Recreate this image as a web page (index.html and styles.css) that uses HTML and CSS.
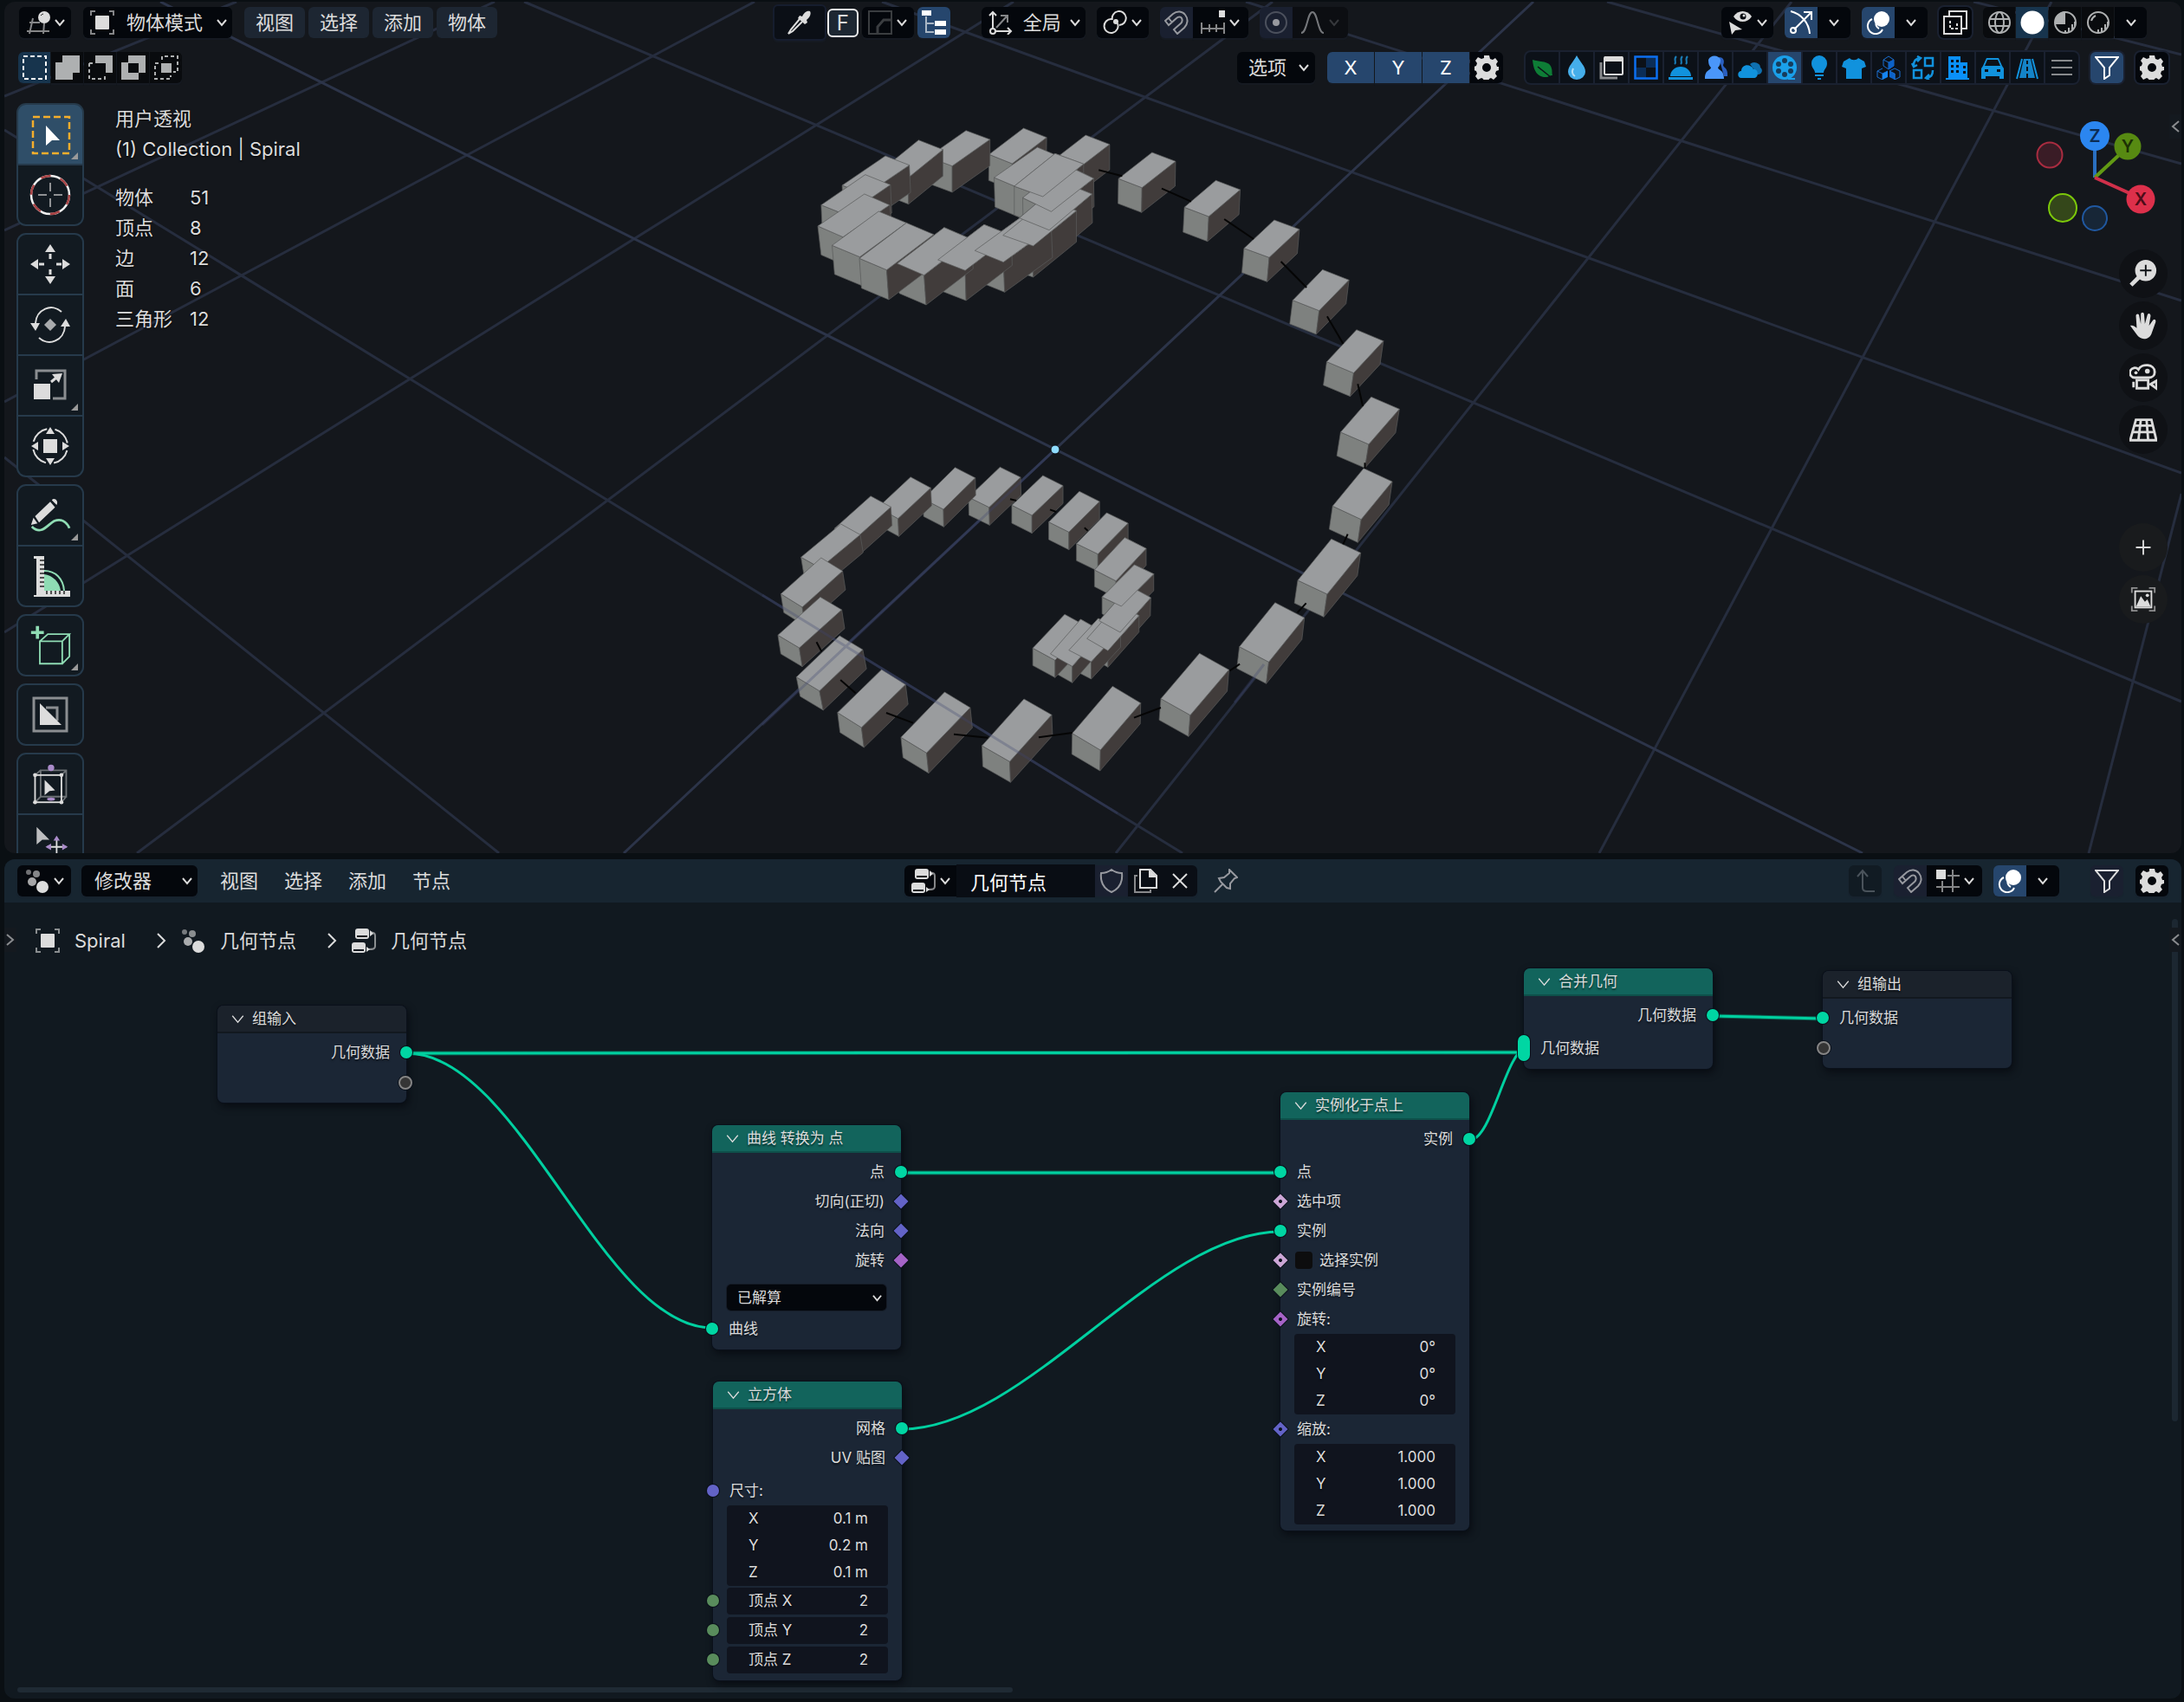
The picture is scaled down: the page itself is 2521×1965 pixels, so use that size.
FILE: index.html
```html
<!DOCTYPE html>
<html lang="zh-CN">
<head>
<meta charset="utf-8">
<title>Spiral</title>
<link rel="stylesheet" href="styles.css">
</head>
<body>
<svg class="sprite" aria-hidden="true">
  <symbol id="chev" viewBox="0 0 12 12"><path d="M1 3l5 6 5-6" class="l2"/></symbol>
  <symbol id="chev-r" viewBox="0 0 12 20"><path d="M2 2l8 8-8 8" class="l2"/></symbol>
  <symbol id="chev-l" viewBox="0 0 12 16"><path d="M10 2L3 8l7 6" class="l2"/></symbol>
  <symbol id="view3d" viewBox="0 0 28 28"><g class="dim"><path d="M8 9L4 27M21 15l-1 12M1 24h26M4 14h12" class="l2"/></g><circle cx="21" cy="8" r="7" class="f"/><path d="M17 6a5 5 0 0 1 3-2" stroke="#222" fill="none"/></symbol>
  <symbol id="object" viewBox="0 0 28 28"><path d="M1 6V1h5M22 1h5v5M27 22v5h-5M6 27H1v-5" class="l2 dim"/><rect x="6" y="6" width="16" height="16" rx="1" class="f"/></symbol>
  <symbol id="sel-set" viewBox="0 0 28 28"><rect x="1" y="1" width="26" height="26" class="l2" stroke-dasharray="5 3"/></symbol>
  <symbol id="sel-add" viewBox="0 0 28 28"><path d="M8 0h20v20h-8v8H0V8h8z" class="f"/></symbol>
  <symbol id="sel-sub" viewBox="0 0 28 28"><path d="M8 0h20v20h-8V9H8z" class="f"/><path d="M1 9v18h18v-5M1 9h4" class="l2" stroke-dasharray="4 3"/></symbol>
  <symbol id="sel-dif" viewBox="0 0 28 28"><path fill-rule="evenodd" d="M8 0h20v20h-8v8H0V8h8zM8 9v11h12V9z" class="f"/></symbol>
  <symbol id="sel-int" viewBox="0 0 28 28"><path d="M9 5V1h18v18h-5M5 9H1v18h18v-4" class="l2" stroke-dasharray="4 3"/><rect x="8" y="9" width="12" height="11" class="f"/></symbol>
  <symbol id="dropper" viewBox="0 0 28 28"><path d="M17 7c2-4 5-7 9-6 2 3-1 8-4 10l1 3-3 2-8-7 2-3z" class="f"/><path d="M14 10L4 22l-3 5 5-3 11-11" class="l2"/></symbol>
  <symbol id="falloff" viewBox="0 0 28 28"><rect x="1" y="1" width="26" height="26" class="l2"/><path d="M11 26v-7l7-8h9" class="l3"/></symbol>
  <symbol id="tree" viewBox="0 0 28 28"><path d="M5 7v18h9M5 15h9" class="l2 dim"/><path d="M0 0h11v6H0zM15 12h13v6H15zM15 22h13v6H15z" class="f"/></symbol>
  <symbol id="axes" viewBox="0 0 28 28"><path d="M5 21V2M1 6l4-4 4 4M8 24h18M22 20l4 4-4 4" class="l2"/><circle cx="5" cy="24" r="3" class="l2"/><path d="M9 20L21 7M14 6h8v8" class="l2 dim"/></symbol>
  <symbol id="pivot" viewBox="0 0 28 28"><path d="M11 11a8 8 0 1 1 8 6M17 15a8 8 0 1 1-7-5" class="l2"/><circle cx="15" cy="13" r="3" class="f"/></symbol>
  <symbol id="magnet" viewBox="0 0 28 28"><path d="M1 12l9-8c5-4 11-3 14 1 4 5 3 11-1 15l-8 7-4-5 8-7c2-2 2-4 1-6s-4-2-6 0l-9 8zM5 9l4 5" class="l2"/></symbol>
  <symbol id="snapinc" viewBox="0 0 28 28"><path d="M1 14v13M10 16v9M18 16v9M27 14v13M1 21h26" class="l2 dim"/><rect x="21" y="0" width="7" height="8" class="f"/></symbol>
  <symbol id="prop" viewBox="0 0 28 28"><circle cx="14" cy="14" r="12" class="l2" opacity=".4"/><circle cx="14" cy="14" r="4" class="f"/></symbol>
  <symbol id="bell" viewBox="0 0 28 28"><path d="M1 26c7 0 7-24 13-24s6 24 13 24" class="l2"/></symbol>
  <symbol id="eyecur" viewBox="0 0 28 28"><path d="M6 7c5-8 16-8 21 0-5 8-16 8-21 0z" class="f"/><circle cx="17" cy="7" r="3.500" fill="#04070c"/><circle cx="18" cy="6" r="1.500" class="f"/><path d="M1 13l15 9-8 1-4 5z" class="f"/></symbol>
  <symbol id="gizmo" viewBox="0 0 28 28"><path d="M2 1c12 3 21 13 22 26M6 22L26 2M17 2h9v9" class="l2"/><circle cx="5" cy="23" r="3" class="l2"/></symbol>
  <symbol id="overlay" viewBox="0 0 28 28"><circle cx="18" cy="10" r="9" class="f"/><path d="M7 10a9 9 0 1 0 12 12M12 13a6 6 0 0 0 3 8" class="l2"/></symbol>
  <symbol id="xray" viewBox="0 0 28 28"><path d="M7 6V1h20v20h-5" class="l2"/><rect x="1" y="7" width="20" height="20" class="l2"/><path d="M8 12v9h8v-7" class="l2" stroke-dasharray="3 2"/></symbol>
  <symbol id="wire" viewBox="0 0 28 28"><circle cx="14" cy="14" r="12" class="l2"/><ellipse cx="14" cy="14" rx="5" ry="12" class="l2"/><path d="M3 10h22M3 18h22" class="l2"/></symbol>
  <symbol id="solid" viewBox="0 0 28 28"><circle cx="14" cy="14" r="13.500" fill="#fff"/></symbol>
  <symbol id="matl" viewBox="0 0 28 28"><circle cx="14" cy="14" r="12" class="l2"/><path d="M14 1a13 13 0 0 0-12 15h12z" class="f"/><path d="M14 26l0-3M18 25v-5M22 22v-6M25 18v-5" class="l2"/></symbol>
  <symbol id="rend" viewBox="0 0 28 28"><circle cx="14" cy="14" r="12" class="l2"/><path d="M6 12a9 9 0 0 1 5-6M14 25v-3M18 25v-5M22 22v-6M25 18v-5" class="l2"/></symbol>
  <symbol id="gear" viewBox="0 0 28 28"><path fill-rule="evenodd" d="M11 0h6l1 4 3 1 3-2 3 4-2 3 1 3 2 0v4l-3 1-1 3 2 3-4 4-3-2-2 1-1 3h-5l-1-3-2-1-4 2-3-4 2-3-1-3-3-1v-4l3-1 1-3-2-3 3-4 4 2 3-1zM14 9a5 5 0 1 0 0 10a5 5 0 0 0 0-10z" class="f"/></symbol>
  <symbol id="leaf" viewBox="0 0 28 28"><path d="M3 5c10 3 20 1 22 10 1 3 0 5 1 8-3 0-4 2-8 2C8 25 4 17 3 5z" fill="#0e7d36"/><path d="M9 13l15 12" stroke="#0c1118" stroke-width="1.500"/></symbol>
  <symbol id="drop" viewBox="0 0 28 28"><path d="M14 0c4 8 10 12 10 19a10 9 0 0 1-20 0C4 12 10 8 14 0z" fill="#45aeea"/><path d="M10 15c-2 4-1 7 2 9" stroke="#fff" stroke-width="2" fill="none" opacity=".6"/></symbol>
  <symbol id="win" viewBox="0 0 28 28"><rect x="6" y="2" width="21" height="20" rx="1" class="l2"/><rect x="6" y="1" width="21" height="6" class="f"/><path d="M2 8v18h19" class="l3 dim"/></symbol>
  <symbol id="check" viewBox="0 0 28 28"><path d="M14 2h12v12H14zM2 14h12v12H2z" fill="#0b2d57"/><rect x="1.500" y="1.500" width="25" height="25" fill="none" stroke="#0c6ff0" stroke-width="2.500"/></symbol>
  <symbol id="food" viewBox="0 0 28 28"><path d="M2 24a12 11 0 0 1 24 0zM0 25h28v3H0z" fill="#1192dd"/><path d="M7 10c3-3-2-5 2-9M14 10c3-3-2-5 2-9M20 10c3-3-2-5 2-9" fill="none" stroke="#1a7db8" stroke-width="2"/></symbol>
  <symbol id="person" viewBox="0 0 28 28"><path d="M18 2c6 0 7 5 5 9 0 3 5 3 5 10v3h-4z" fill="#2a5fc0"/><path d="M6 5c2-6 12-6 14 0 0 5-1 7-3 9 1 4 7 2 7 13H2c0-11 6-9 7-13-2-2-3-4-3-9z" fill="#4a96fa"/></symbol>
  <symbol id="cloud" viewBox="0 0 28 28"><path d="M14 10a7 6 0 0 1 12 4c4 3 1 8-3 8z" fill="#0f70b0"/><path d="M4 26c-5 0-5-8 0-8 0-8 11-9 14-2 6-1 7 10 0 10z" fill="#1192dd"/></symbol>
  <symbol id="reel" viewBox="0 0 28 28"><circle cx="14" cy="14" r="14" fill="#1aa0ea"/><g fill="#163c5c"><circle cx="14" cy="6" r="3"/><circle cx="14" cy="22" r="3"/><circle cx="7" cy="10" r="3"/><circle cx="21" cy="10" r="3"/><circle cx="7" cy="18" r="3"/><circle cx="21" cy="18" r="3"/></g><path d="M18 27h8" stroke="#1aa0ea" stroke-width="2"/></symbol>
  <symbol id="bulb" viewBox="0 0 28 28"><path d="M9 20c0-4-4-5-4-11a9 9 0 0 1 18 0c0 6-4 7-4 11zM9 22h10v2H9zM12 26h4v2h-4z" fill="#1192dd"/></symbol>
  <symbol id="shirt" viewBox="0 0 28 28"><path d="M9 3c2 3 8 3 10 0l7 4 2 6-5 2v12H5V15l-5-2 2-6z" fill="#1192dd"/></symbol>
  <symbol id="cubes" viewBox="0 0 28 28"><path d="M8 5l6-4 6 4v7l-6 4-6-4zM8 5l6 3 6-3M14 8v8M7 15l-6 3v7l6 3M7 21v7M1 18l6 3 6-3M21 21v7" class="bl"/><path d="M7 21l6-3v7l-6 3z" fill="#1484f0"/><path d="M15 18l6 3v7l-6-3zM14 8l6-3v7l-6 4z" fill="#0c62c8"/><path d="M15 18l6-3 6 3v7l-6 3v-7z" class="bl"/></symbol>
  <symbol id="swap" viewBox="0 0 28 28"><g fill="none" stroke="#1192dd" stroke-width="2.500"><path d="M16 3h9v9h-9zM3 17h9v9H3zM3 12c0-6 2-8 7-9M25 17c0 6-2 8-7 9"/><path d="M7 1l4 2-4 4M21 28l-4-2 4-4M1 9l2 4 4-2"/></g></symbol>
  <symbol id="build" viewBox="0 0 28 28"><path fill-rule="evenodd" d="M3 1h14v7h8v18h2v2H0v-2h3zM6 5v3h3V5zm6 0v3h3V5zM6 11v3h3v-3zm6 0v3h3v-3zM6 17v3h3v-3zm6 0v3h3v-3zM20 12v3h3v-3zm0 6v3h3v-3z" fill="#0a90fa"/></symbol>
  <symbol id="car" viewBox="0 0 28 28"><path fill-rule="evenodd" d="M7 3h14l4 9 2 3v12h-5v-3H6v3H1V15l2-3zM8 5l-3 7h18l-3-7zM5 16v3h4v-3zm14 0v3h4v-3z" fill="#1192dd"/></symbol>
  <symbol id="road" viewBox="0 0 28 28"><path fill-rule="evenodd" d="M10 4h8l5 22H5zM13 6v4h2V6zm0 7v5h2v-5zm0 8v5h2v-5z" fill="#1484c8"/><path d="M8 4L2 27M20 4l6 23" stroke="#1192dd" stroke-width="2"/></symbol>
  <symbol id="list" viewBox="0 0 28 28"><path d="M2 6h24M2 14h24M2 22h24" class="l2 dim"/></symbol>
  <symbol id="filter" viewBox="0 0 28 28"><path d="M1 2h26L17 14v9l-6 4V14z" class="l2"/></symbol>
  <symbol id="geo" viewBox="0 0 28 28"><circle cx="4" cy="4" r="3" class="f" opacity=".5"/><circle cx="13" cy="6" r="4" class="f" opacity=".6"/><circle cx="8" cy="15" r="5" class="f" opacity=".75"/><circle cx="20" cy="21" r="7" class="f"/></symbol>
  <symbol id="ntree" viewBox="0 0 28 28"><path d="M21 4c7 1 6 3 6 7v9c0 4-3 4-8 4" class="l2 dim"/><rect x="4" y="0" width="16" height="12" rx="3" class="f"/><rect x="0" y="16" width="16" height="12" rx="3" class="f"/><path d="M6 9h12M2 25h12" stroke="#10161d" stroke-width="2"/><path d="M21 2l4 4-4 3zM17 21l4 3-4 3z" class="f"/></symbol>
  <symbol id="shield" viewBox="0 0 28 28"><path d="M14 1c4 3 8 4 12 4 1 10-3 18-12 22C5 23 1 15 2 5c4 0 8-1 12-4z" class="l2"/></symbol>
  <symbol id="copy" viewBox="0 0 28 28"><path d="M8 1h12l7 7v14H8z" class="l2"/><path d="M18 0l10 10H18z" class="f"/><path d="M5 8H2v19h18v-3" class="l2 dim"/></symbol>
  <symbol id="close" viewBox="0 0 28 28"><path d="M6 6l16 16M22 6L6 22" class="l2"/></symbol>
  <symbol id="pin" viewBox="0 0 28 28"><path d="M18 1l9 9-3 1-5 6 0 6-4-1-7-7-2-4 6-1 6-5zM10 18l-9 9" class="l2"/></symbol>
  <symbol id="up" viewBox="0 0 28 28"><path d="M5 9l6-7 6 7M11 2v20c0 3 2 4 5 4h9" class="l2"/></symbol>
  <symbol id="snapgrid" viewBox="0 0 28 28"><path d="M8 14v13M20 1v26M14 8h14M1 21h27" class="l2 dim"/><rect x="1" y="1" width="11" height="11" class="f"/></symbol>
  <symbol id="zoom" viewBox="0 0 34 34"><circle cx="20" cy="13" r="13" class="f"/><path d="M12 21L2 31" stroke="currentColor" stroke-width="5"/><path d="M13 13h14M20 6v14" stroke="#0e1014" stroke-width="2"/></symbol>
  <symbol id="hand" viewBox="0 0 34 34"><path d="M1 17c3-1 6 1 8 3L8 5c0-3 4-3 4 0l2 10V3c0-3 4-3 4 0l1 12 3-11c1-3 4-2 4 1l-2 12 5-7c2-2 4 0 3 3l-5 14c-3 8-14 8-18 1z" class="f"/></symbol>
  <symbol id="cam" viewBox="0 0 34 34"><g class="l3"><path d="M7 17a6 6 0 1 1 4-10c4-8 20-7 20 3 0 4-3 7-7 7z"/><path d="M9 20h14v10H9zM5 22v7M26 25l7-4v9z"/></g><circle cx="8" cy="11" r="2" class="f"/><circle cx="22" cy="9" r="3" class="f"/></symbol>
  <symbol id="persp" viewBox="0 0 34 34"><path d="M8 5h19l6 25H1zM6 12h23M4 20h27M14 5l-3 25M21 5l2 25" class="l3"/></symbol>
  <symbol id="plus" viewBox="0 0 34 34"><path d="M8 17h18M17 8v18" class="l2"/></symbol>
  <symbol id="image" viewBox="0 0 34 34"><path d="M3 9V3h7M24 3h7v6M31 25v6h-7M10 31H3v-6" class="l2 dim"/><rect x="7" y="7" width="20" height="20" class="l2"/><path d="M8 26l6-13 5 7 3-3 4 9z" class="f"/><circle cx="22" cy="12" r="2" class="f"/></symbol>

  <symbol id="t-select" viewBox="0 0 48 48"><rect x="4" y="4" width="42" height="42" fill="none" stroke="#f5ae2c" stroke-width="2.500" stroke-dasharray="8 4"/><path d="M19 14l16 17-9 0-7 6z" class="f"/></symbol>
  <symbol id="t-cursor" viewBox="0 0 48 48"><circle cx="24" cy="24" r="22" fill="none" stroke="#f0f0f0" stroke-width="2.500"/><circle cx="24" cy="24" r="22" fill="none" stroke="#a84345" stroke-width="2.500" stroke-dasharray="11.500 11.500"/><path d="M10 24h10M28 24h10M24 10v10M24 28v10" stroke="#bbb" stroke-width="1.500"/></symbol>
  <symbol id="t-move" viewBox="0 0 48 48"><path d="M24 1l6 9H18zM24 47l6-9H18zM1 24l9-6v12zM47 24l-9-6v12z" class="f"/><path d="M24 12v6M24 30v6M11 24h6M31 24h6" class="l3"/></symbol>
  <symbol id="t-rotate" viewBox="0 0 48 48"><path d="M7 22a18 19 0 0 1 30-13M41 26a18 19 0 0 1-30 13" class="l2"/><path d="M1 22h11l-5 9zM47 26H36l6-9z" class="f"/><path d="M24 17l7 7-7 7-7-7z" class="f" opacity=".75"/></symbol>
  <symbol id="t-scale" viewBox="0 0 48 48"><path d="M8 17V7h33v32H27" class="l3 dim"/><rect x="5" y="22" width="19" height="18" class="f"/><path d="M25 20l6-5" class="l3"/><path d="M26 11l12-1-4 11z" class="f"/></symbol>
  <symbol id="t-transform" viewBox="0 0 48 48"><circle cx="24" cy="24" r="20" class="l2" stroke-dasharray="22 9.400" stroke-dashoffset="-5"/><path d="M24 2l5 8H19zM24 46l5-8H19zM2 24l8-5v10zM46 24l-8-5v10z" class="f"/><rect x="16" y="16" width="16" height="16" class="f"/></symbol>
  <symbol id="t-note" viewBox="0 0 52 48"><path d="M3 38c12 12 20-3 28-7 8-3 15 0 19 9" fill="none" stroke="#8fdcb4" stroke-width="3"/><path d="M2 36l3-9 5 7zM7 25L26 7l6 7L12 33zM28 5c3-4 9 1 6 6z" class="f"/></symbol>
  <symbol id="t-measure" viewBox="0 0 48 48"><path d="M17 22a22 22 0 0 1 19 19H17z" fill="#8fdcb4"/><path d="M17 18c13 0 22 9 23 23" fill="none" stroke="#8fdcb4" stroke-width="2"/><path d="M5 1h12v40h30v7H5v-2h3V4H5z" class="f"/><path d="M12 6h5M12 11h5M12 16h5M12 21h5M12 26h5M12 31h5M12 36h5M20 41v4M25 41v4M30 41v4M35 41v4M40 41v4" stroke="#222" stroke-width="1.500"/></symbol>
  <symbol id="t-cube" viewBox="0 0 52 52"><g fill="none" stroke="#8fdcb4" stroke-width="2"><path d="M13 21h28v28H13zM13 21l10-9h27l-9 9M50 12v28l-9 9"/></g><path d="M2 10h16M10 2v16" stroke="#8fdcb4" stroke-width="4"/></symbol>
  <symbol id="t-mesh" viewBox="0 0 48 48"><rect x="5" y="5" width="38" height="38" class="l3 dim"/><path d="M19 16h13v15" class="l3 dim"/><path d="M12 11l25 25H12z" class="f"/></symbol>
  <symbol id="t-cage" viewBox="0 0 52 52"><path d="M14 9h32v33H14zM7 15l7-6M40 15l6-6M7 49l7-7M40 49l6-7" class="l2" opacity=".45"/><rect x="7" y="15" width="33" height="34" class="l2"/><g class="f"><circle cx="7" cy="15" r="2.500"/><circle cx="40" cy="15" r="2.500"/><circle cx="7" cy="49" r="2.500"/><circle cx="40" cy="49" r="2.500"/></g><circle cx="27" cy="6" r="4" fill="#a98bc9"/><ellipse cx="27" cy="45" rx="5" ry="2" fill="#a98bc9"/><path d="M19 21l13 13-7 1-6 5z" class="f"/></symbol>
  <symbol id="t-shear" viewBox="0 0 52 48"><path d="M9 2l16 16-9 0-7 6z" class="f" opacity=".85"/><path d="M22 27h24M34 17v22" class="l2"/><path d="M34 13l4 6h-8zM20 27l7-4v8zM48 27l-7-4v8z" fill="#a98bc9"/></symbol>
</svg>

<section class="viewport" aria-label="3D">
  <svg class="scene" viewBox="5 2 2513 983" preserveAspectRatio="xMidYMid slice" aria-hidden="true">
    <g class="grid">
      <path d="M158 985L1469 2M5 730L1170 2M5 464L871 2M5 266L571 2M5 111L273 2M1288 985L2068 2M1846 985L2368 2M2411 985L2518 570"/>
      <path d="M605 2L2518 810M1018 2L2518 546M1438 2L2518 347M1855 2L2518 189M2278 2L2518 63M5 150L1365 985M5 528L576 985"/>
      <path class="main" d="M720 985L1770 2M185 2L2150 985"/>
    </g>
    <g id="upper" transform="translate(880 120) scale(.4847 .3333)"></g>
    <g id="lower" transform="translate(880 500) scale(.4847 .3333)"></g>
    <path class="veil" d="M1218 519L880 837M880 687L1290 939M1459 767L1425 811"/>
    <circle cx="1218" cy="519" r="5" fill="#8fdcff" stroke="#0a0d12" stroke-width="1"/>
  </svg>

  <header class="bar top">
    <button class="b w60" aria-label="编辑器类型"><svg class="i"><use href="#view3d"/></svg><svg class="c"><use href="#chev"/></svg></button>
    <label class="dd mode"><svg class="i"><use href="#object"/></svg><select aria-label="模式"><option>物体模式</option></select><svg class="c"><use href="#chev"/></svg></label>
    <nav class="menus"><button>视图</button><button>选择</button><button>添加</button><button>物体</button></nav>
    <div class="sp-a"></div>
    <button class="b framed"><svg class="i"><use href="#dropper"/></svg></button>
    <button class="b fkey">F</button>
    <button class="b w60 faded m4"><svg class="i"><use href="#falloff"/></svg><svg class="c"><use href="#chev"/></svg></button>
    <button class="b on m4"><svg class="i"><use href="#tree"/></svg></button>
    <label class="dd orient"><svg class="i"><use href="#axes"/></svg><select aria-label="坐标系"><option>全局</option></select><svg class="c"><use href="#chev"/></svg></label>
    <button class="b w60 m13"><svg class="i"><use href="#pivot"/></svg><svg class="c"><use href="#chev"/></svg></button>
    <div class="join m13"><button class="b navy dimi"><svg class="i"><use href="#magnet"/></svg></button><button class="b w64"><svg class="i"><use href="#snapinc"/></svg><svg class="c"><use href="#chev"/></svg></button></div>
    <div class="join m13"><button class="b navy dimi"><svg class="i"><use href="#prop"/></svg></button><button class="b w64 off"><svg class="i"><use href="#bell"/></svg><svg class="c"><use href="#chev"/></svg></button></div>
    <div class="sp-b"></div>
    <button class="b w60"><svg class="i"><use href="#eyecur"/></svg><svg class="c"><use href="#chev"/></svg></button>
    <div class="join m13"><button class="b on"><svg class="i"><use href="#gizmo"/></svg></button><button class="b"><svg class="c"><use href="#chev"/></svg></button></div>
    <div class="join m13"><button class="b on"><svg class="i"><use href="#overlay"/></svg></button><button class="b"><svg class="c"><use href="#chev"/></svg></button></div>
    <button class="b m13 edge"><svg class="i"><use href="#xray"/></svg></button>
    <div class="join m13 shade"><button class="b"><svg class="i"><use href="#wire"/></svg></button><button class="b sel"><svg class="i"><use href="#solid"/></svg></button><button class="b"><svg class="i"><use href="#matl"/></svg></button><button class="b"><svg class="i"><use href="#rend"/></svg></button><button class="b"><svg class="c"><use href="#chev"/></svg></button></div>
  </header>

  <div class="bar second">
    <div class="join selmodes"><button class="b sel"><svg class="i"><use href="#sel-set"/></svg></button><button class="b"><svg class="i"><use href="#sel-add"/></svg></button><button class="b"><svg class="i"><use href="#sel-sub"/></svg></button><button class="b"><svg class="i"><use href="#sel-dif"/></svg></button><button class="b"><svg class="i"><use href="#sel-int"/></svg></button></div>
    <div class="push"></div>
    <button class="b opts">选项<svg class="c"><use href="#chev"/></svg></button>
    <div class="join xyz"><button class="b on">X</button><button class="b on">Y</button><button class="b on">Z</button><button class="b"><svg class="i"><use href="#gear"/></svg></button></div>
    <div class="join strip">
      <button class="b"><svg class="i"><use href="#leaf"/></svg></button><button class="b"><svg class="i"><use href="#drop"/></svg></button><button class="b"><svg class="i"><use href="#win"/></svg></button><button class="b"><svg class="i"><use href="#check"/></svg></button><button class="b"><svg class="i"><use href="#food"/></svg></button><button class="b"><svg class="i"><use href="#person"/></svg></button><button class="b"><svg class="i"><use href="#cloud"/></svg></button><button class="b on"><svg class="i"><use href="#reel"/></svg></button><button class="b"><svg class="i"><use href="#bulb"/></svg></button><button class="b"><svg class="i"><use href="#shirt"/></svg></button><button class="b"><svg class="i"><use href="#cubes"/></svg></button><button class="b"><svg class="i"><use href="#swap"/></svg></button><button class="b"><svg class="i"><use href="#build"/></svg></button><button class="b"><svg class="i"><use href="#car"/></svg></button><button class="b"><svg class="i"><use href="#road"/></svg></button><button class="b"><svg class="i"><use href="#list"/></svg></button>
    </div>
    <button class="b on edge m14"><svg class="i"><use href="#filter"/></svg></button>
    <button class="b edge m14"><svg class="i"><use href="#gear"/></svg></button>
  </div>

  <div class="stage">
    <div class="tools">
      <div class="tg"><button class="on more"><svg><use href="#t-select"/></svg></button><button><svg><use href="#t-cursor"/></svg></button></div>
      <div class="tg"><button><svg><use href="#t-move"/></svg></button><button><svg><use href="#t-rotate"/></svg></button><button class="more"><svg><use href="#t-scale"/></svg></button><button><svg><use href="#t-transform"/></svg></button></div>
      <div class="tg"><button class="more"><svg><use href="#t-note"/></svg></button><button><svg><use href="#t-measure"/></svg></button></div>
      <div class="tg"><button class="more"><svg><use href="#t-cube"/></svg></button></div>
      <div class="tg"><button><svg><use href="#t-mesh"/></svg></button></div>
      <div class="tg"><button><svg><use href="#t-cage"/></svg></button><button><svg><use href="#t-shear"/></svg></button></div>
    </div>
    <div class="info">
      <p>用户透视</p>
      <p>(1) Collection | Spiral</p>
      <dl><dt>物体</dt><dd>51</dd><dt>顶点</dt><dd>8</dd><dt>边</dt><dd>12</dd><dt>面</dt><dd>6</dd><dt>三角形</dt><dd>12</dd></dl>
    </div>
    <div class="push"></div>
    <div class="navs">
      <svg class="gz" viewBox="2346 130 156 152">
        <path d="M2418 205V172" stroke="#2a6fc0" stroke-width="4"/><path d="M2418 205l28-26" stroke="#629a14" stroke-width="4"/><path d="M2418 205l40 18" stroke="#d0304a" stroke-width="4"/>
        <circle cx="2366" cy="179" r="14.500" fill="#3a1c26" stroke="#a92c40" stroke-width="2"/><circle cx="2381" cy="240" r="16" fill="#34471a" stroke="#7cc80a" stroke-width="2"/><circle cx="2418" cy="252" r="14" fill="#172637" stroke="#2058a0" stroke-width="2"/>
        <circle cx="2456" cy="169" r="15.500" fill="#578a12"/><circle cx="2418" cy="157" r="17" fill="#2b86f0"/><circle cx="2471" cy="230" r="16.500" fill="#dd304b"/>
        <text x="2418" y="164" fill="#0c2c54">Z</text><text x="2456" y="176" fill="#1c3004">Y</text><text x="2471" y="237" fill="#4c0c18">X</text>
      </svg>
      <button><svg><use href="#zoom"/></svg></button><button><svg><use href="#hand"/></svg></button><button><svg><use href="#cam"/></svg></button><button><svg><use href="#persp"/></svg></button>
      <button class="far"><svg><use href="#plus"/></svg></button><button><svg><use href="#image"/></svg></button>
    </div>
    <button class="tab r" aria-label="侧栏"><svg><use href="#chev-l"/></svg></button>
  </div>
</section>

<section class="editor" aria-label="几何节点">
  <header class="bar ehead">
    <button class="b w62"><svg class="i"><use href="#geo"/></svg><svg class="c"><use href="#chev"/></svg></button>
    <label class="dd modif"><select aria-label="类型"><option>修改器</option></select><svg class="c"><use href="#chev"/></svg></label>
    <nav class="menus flat"><button>视图</button><button>选择</button><button>添加</button><button>节点</button></nav>
    <div class="sp-a"></div>
    <div class="join"><button class="b w60"><svg class="i"><use href="#ntree"/></svg><svg class="c"><use href="#chev"/></svg></button><input class="name" type="text" value="几何节点" aria-label="名称"><button class="b navy dimi"><svg class="i"><use href="#shield"/></svg></button><button class="b wide"><svg class="i"><use href="#copy"/></svg></button><button class="b wide"><svg class="i"><use href="#close"/></svg></button></div>
    <button class="b bare dimi m14"><svg class="i"><use href="#pin"/></svg></button>
    <div class="sp-b"></div>
    <button class="b off2"><svg class="i"><use href="#up"/></svg></button>
    <div class="join m14"><button class="b navy dimi"><svg class="i"><use href="#magnet"/></svg></button><button class="b w64"><svg class="i"><use href="#snapgrid"/></svg><svg class="c"><use href="#chev"/></svg></button></div>
    <div class="join m13"><button class="b on"><svg class="i"><use href="#overlay"/></svg></button><button class="b"><svg class="c"><use href="#chev"/></svg></button></div>
    <button class="b navy m36"><svg class="i"><use href="#filter"/></svg></button>
    <button class="b m14"><svg class="i"><use href="#gear"/></svg></button>
  </header>

  <div class="canvas">
    <nav class="crumbs" aria-label="路径"><svg class="i"><use href="#object"/></svg><a href="#">Spiral</a><svg class="s"><use href="#chev-r"/></svg><svg class="i"><use href="#geo"/></svg><a href="#">几何节点</a><svg class="s"><use href="#chev-r"/></svg><svg class="i"><use href="#ntree"/></svg><a href="#">几何节点</a></nav>
    <div class="vbar"></div><div class="hbar"></div>
    <button class="tab l" aria-label="工具栏"><svg><use href="#chev-l"/></svg></button>
    <button class="tab r" aria-label="侧栏"><svg><use href="#chev-l"/></svg></button>

    <svg class="wires" aria-hidden="true"><g transform="translate(-5 -1042)">
      <path class="sh" d="M470 1216L1758 1215"/><path d="M470 1216L1758 1215"/>
      <path d="M470 1216C600 1216 695 1533 822 1533"/>
      <path class="sh" d="M1041 1354L1478 1354"/><path d="M1041 1354L1478 1354"/>
      <path d="M1041 1650C1185 1650 1335 1422 1478 1422"/>
      <path d="M1697 1316C1722 1316 1738 1214 1762 1209"/>
      <path class="sh" d="M1977 1173L2104 1176"/><path d="M1977 1173L2104 1176"/>
    </g></svg>

    <article class="node n-in plain">
      <h3><svg><use href="#chev"/></svg>组输入</h3>
      <div class="row out"><i class="so g"></i>几何数据</div>
      <div class="row out"><i class="so v"></i></div>
    </article>

    <article class="node n-curve">
      <h3><svg><use href="#chev"/></svg>曲线 转换为 点</h3>
      <div class="row out"><i class="so g"></i>点</div>
      <div class="row out"><i class="so di blue"></i>切向(正切)</div>
      <div class="row out"><i class="so di blue"></i>法向</div>
      <div class="row out"><i class="so di vio"></i>旋转</div>
      <label class="ndd"><select aria-label="模式"><option>已解算</option></select><svg><use href="#chev"/></svg></label>
      <div class="row"><i class="so g"></i>曲线</div>
    </article>

    <article class="node n-cube">
      <h3><svg><use href="#chev"/></svg>立方体</h3>
      <div class="row out"><i class="so g"></i>网格</div>
      <div class="row out"><i class="so di blue"></i>UV 贴图</div>
      <div class="row gap"><i class="so blue"></i>尺寸:</div>
      <div class="vec"><label>X<input value="0.1 m"></label><label>Y<input value="0.2 m"></label><label>Z<input value="0.1 m"></label></div>
      <div class="row num"><i class="so grn"></i><label>顶点 X<input value="2"></label></div>
      <div class="row num"><i class="so grn"></i><label>顶点 Y<input value="2"></label></div>
      <div class="row num"><i class="so grn"></i><label>顶点 Z<input value="2"></label></div>
    </article>

    <article class="node n-inst">
      <h3><svg><use href="#chev"/></svg>实例化于点上</h3>
      <div class="row out"><i class="so g"></i>实例</div>
      <div class="row gap"><i class="so g"></i>点</div>
      <div class="row"><i class="so di pink dot"></i>选中项</div>
      <div class="row"><i class="so g"></i>实例</div>
      <div class="row"><i class="so di pink dot"></i><label class="ck"><input type="checkbox">选择实例</label></div>
      <div class="row"><i class="so di grn"></i>实例编号</div>
      <div class="row"><i class="so di vio dot"></i>旋转:</div>
      <div class="vec"><label>X<input value="0°"></label><label>Y<input value="0°"></label><label>Z<input value="0°"></label></div>
      <div class="row"><i class="so di blue dot"></i>缩放:</div>
      <div class="vec"><label>X<input value="1.000"></label><label>Y<input value="1.000"></label><label>Z<input value="1.000"></label></div>
    </article>

    <article class="node n-join">
      <h3><svg><use href="#chev"/></svg>合并几何</h3>
      <div class="row out"><i class="so g"></i>几何数据</div>
      <div class="row gap"><i class="so g multi"></i>几何数据</div>
    </article>

    <article class="node n-out plain">
      <h3><svg><use href="#chev"/></svg>组输出</h3>
      <div class="row"><i class="so g"></i>几何数据</div>
      <div class="row"><i class="so v"></i></div>
    </article>
  </div>
</section>
<script src="scene.js"></script>
</body>
</html>
```
FILE: styles.css
```css
* { box-sizing: border-box; }
body {
  margin: 0; height: 100vh; padding: 2px 3px 4px 5px; overflow: hidden;
  display: flex; flex-direction: column; gap: 7px;
  background: #0a0f13; color: #dcdcdc;
  font: 22px/35px Inter, "Noto Sans CJK SC", sans-serif;
}
button, input, select { font: inherit; color: inherit; border: 0; margin: 0; padding: 0; background: none; outline: 0; }
select { appearance: none; flex: 1; min-width: 0; }
a { color: inherit; text-decoration: none; }
p, dl, dd, h3 { margin: 0; font-weight: 400; }
svg { display: block; flex: none; }
.sprite { position: absolute; width: 0; height: 0; }
.f { fill: currentColor; stroke: none; }
.l2 { fill: none; stroke: currentColor; stroke-width: var(--line, 2); }
.l3 { fill: none; stroke: currentColor; stroke-width: 3; }
.dim { opacity: .6; }
.bl { fill: none; stroke: #1a6fd0; stroke-width: 1; }
.i { width: 28px; height: 28px; }
.c { width: 12px; height: 12px; }

/* areas */
.viewport, .editor { position: relative; overflow: hidden; border-radius: 12px; display: flex; flex-direction: column; min-height: 0; }
.viewport { flex: 983 1 0; background: #14171c; }
.editor { flex: 969 1 0; background: #111920; }

/* header bars */
.bar { display: flex; align-items: center; height: 36px; flex: none; position: relative; }
.top { margin: 6px 40px 0 17px; }
.second { margin: 16px 15px 0 16px; }
.ehead { height: 50px; padding: 0 15px; background: #172530; }
.sp-a { flex: 14; }
.sp-b { flex: 19; }
.ehead .sp-a { flex: 8; }
.ehead .sp-b { flex: 11; }
.push { flex: 1; }
.b {
  height: 36px; width: 38px; border-radius: 6px; background: #04070c; flex: none;
  display: flex; align-items: center; justify-content: center; gap: 5px;
  box-shadow: 0 2px 1px #1a202c66;
}
.w60 { width: 60px; }
.w62 { width: 62px; }
.w64 { width: 64px; }
.wide { width: 40px; background: #0a0e15; }
.on { background: #26466d; color: #fff; }
.sel { background: #17344d; color: #fff; }
.navy { background: #1a2030; }
.dimi { color: #97999f; }
.off { background: #0c0e12; color: #75777b; }
.off .c { opacity: .4; }
.off2 { background: #111b23; color: #4a535b; }
.faded .i { opacity: .25; }
.bare { background: none; box-shadow: none; width: 38px; }
.edge { box-shadow: 0 0 0 2px #1a2130; }
.framed { width: 62px; height: 42px; background: #0b0f16; border: 2px solid #161d2e; }
.fkey { width: 36px; height: 33px; border: 2px solid #eee; background: #1d2732; font-size: 24px; margin-left: 1px; }
.m4 { margin-left: 4px; }
.m13 { margin-left: 13px; }
.m14 { margin-left: 14px; }
.m36 { margin-left: 36px; }
.join { display: flex; flex: none; align-items: center; }
.join > * { border-radius: 0; }
.join > :first-child { border-radius: 6px 0 0 6px; }
.join > :last-child { border-radius: 0 6px 6px 0; }
.dd { display: flex; align-items: center; height: 36px; border-radius: 6px; background: #04070c; padding: 0 6px 0 8px; flex: none; box-shadow: 0 2px 1px #1a202c66; }
.mode { width: 172px; margin-left: 14px; }
.mode .i { margin-right: 14px; }
.orient { width: 120px; margin-left: 36px; }
.orient .i { margin-right: 12px; }
.modif { width: 134px; margin-left: 12px; padding-left: 15px; }
.menus { display: flex; gap: 4px; margin-left: 14px; }
.menus button { height: 36px; padding: 0 13px; border-radius: 6px; background: #1d2632; }
.flat { gap: 0; margin-left: 11px; }
.flat button { padding: 0 15px; background: none; }
.shade, .selmodes { gap: 1px; }
.shade .b { width: 37px; }
.shade .b:not(.sel):not(:last-child), .selmodes .b:not(.sel) { background: #090b0e; color: #aeb0b1; }
.selmodes .b { width: 37px; }
.opts { width: 90px; gap: 14px; padding-left: 6px; }
.xyz { gap: 1px; margin: 0 26px 0 14px; }
.xyz .on { width: 54px; }
.strip { gap: 2px; background: #1a2130; border-radius: 6px; box-shadow: 0 0 0 2px #1a2130; }
.strip .b { box-shadow: none; background: #0c1118; }
.strip .on { background: #26466d; }
.name { width: 160px; height: 38px; background: #090d14; padding-left: 16px; color: #fff; }

/* 3D viewport */
.scene { position: absolute; inset: 0; width: 100%; height: 100%; }
.grid path { stroke: #262d3e; stroke-width: 3; fill: none; }
.grid .main { stroke: #2c3449; }
.veil { stroke: #3e4670; stroke-width: 3; opacity: .3; fill: none; }
.ct { fill: #9a9c9e; }
.cl { fill: #7e817f; }
.cr { fill: #413c3b; }
.ct, .cl, .cr { stroke: #5a5b5b; stroke-width: 1; vector-effect: non-scaling-stroke; stroke-linejoin: round; stroke-opacity: .7; }
.thread { stroke: #050505; stroke-width: 2; vector-effect: non-scaling-stroke; fill: none; }
.stage { position: relative; flex: 1; min-height: 0; display: flex; align-items: flex-start; padding: 24px 16px 0 15px; }
.tools { display: flex; flex-direction: column; gap: 10px; width: 76px; }
.tg { display: flex; flex-direction: column; gap: 2px; padding: 1px; background: #263a4b; border-radius: 10px; box-shadow: 0 0 0 1px #263a4b; overflow: hidden; }
.tg button { position: relative; height: 68px; display: flex; align-items: center; justify-content: center; background: #121a21; }
.tg button:first-child { border-radius: 9px 9px 0 0; }
.tg button:last-child { border-radius: 0 0 9px 9px; }
.tg button:only-child { border-radius: 9px; }
.tg .on { background: #2f4e68; }
.tg svg { width: 48px; height: 48px; }
.more::after { content: ""; position: absolute; right: 5px; bottom: 5px; border: 4px solid; border-color: transparent #9a9a9a #9a9a9a transparent; }
.info { margin-left: 37px; text-shadow: 0 1px 2px #000; }
.info dl { display: grid; grid-template-columns: 86px auto; margin-top: 21px; }
.navs { display: flex; flex-direction: column; align-items: flex-end; gap: 4px; margin-top: -14px; padding-top: 24px; }
.gz { width: 156px; height: 152px; margin-bottom: 2px; }
.gz text { font-size: 20px; font-weight: 600; text-anchor: middle; }
.navs button { width: 56px; height: 56px; border-radius: 50%; background: #0f1115; display: flex; align-items: center; justify-content: center; }
.navs button svg { width: 32px; height: 32px; }
.navs .far { margin-top: 76px; }
.navs .far, .navs .far + button { background: #191b1d; }
.tab { position: absolute; width: 14px; height: 28px; background: #14191f; color: #8a8c8f; display: flex; align-items: center; justify-content: center; }
.tab svg { width: 12px; height: 16px; }
.tab.r { right: 0; top: 36px; }
.canvas .tab { top: 29px; }
.tab.l { left: 0; }
.tab.l svg { transform: scaleX(-1); }

/* node editor */
.canvas { position: relative; flex: 1; min-height: 0; }
.crumbs { display: flex; align-items: center; height: 36px; margin: 26px 0 0 36px; }
.crumbs a { margin: 0 35px 0 17px; }
.crumbs .s { width: 12px; height: 20px; margin-right: 17px; }
.vbar { position: absolute; right: 4px; top: 19px; bottom: 320px; width: 7px; border-radius: 4px; background: #1c2731; }
.hbar { position: absolute; left: 15px; right: 53.7%; bottom: 7px; height: 6px; border-radius: 3px; background: #1f2a34; }
.wires { position: absolute; inset: 0; width: 100%; height: 100%; }
.wires path { fill: none; stroke: #00d0a0; stroke-width: 3; }
.wires .sh { stroke: #0a5a4c; stroke-width: 5; }
.node {
  position: absolute; width: 218px; padding-bottom: 7px; border-radius: 7px; background: #1b2635;
  font-size: 17px; line-height: 34px; box-shadow: 0 0 0 1px #0a101a, 2px 4px 10px #05080ccc; text-shadow: 0 2px 2px #0008;
}
.node h3 { display: flex; align-items: center; gap: 9px; height: 32px; padding-left: 16px; margin-bottom: 5px; font-size: 17px; background: #12645c; border-bottom: 2px solid #0e504a; border-radius: 7px 7px 0 0; }
.node h3 svg { width: 15px; height: 15px; --line: 1; }
.plain h3 { background: #1b222b; border-color: #12181f; }
.row { position: relative; height: 34px; padding: 0 19px; }
.out { text-align: right; }
.gap { margin-top: 4px; }
.so { position: absolute; left: -7px; top: 10px; width: 14px; height: 14px; border-radius: 50%; box-shadow: 0 0 0 1px #0a101a; }
.out .so { left: auto; right: -7px; }
.g { background: #00d6a3; }
.v { background: #353535; border: 2px solid #858585; width: 16px; height: 16px; }
.di { border-radius: 0; transform: rotate(45deg); width: 12px; height: 12px; top: 11px; left: -6px; }
.out .di { right: -6px; }
.blue { background: #6363c7; }
.vio { background: #a563c7; }
.pink { background: #cca6d6; }
.grn { background: #598c5c; }
.dot::after { content: ""; position: absolute; left: 4px; top: 4px; width: 4px; height: 4px; border-radius: 50%; background: #0a101a; }
.multi { height: 30px; top: 2px; border-radius: 7px; }
.ndd { display: flex; align-items: center; height: 30px; margin: 11px 17px 4px; padding: 0 5px 0 12px; background: #04070c; border-radius: 5px; box-shadow: 0 0 0 1px #151c28; }
.ndd svg { width: 11px; height: 11px; }
.vec { margin: 0 16px; background: #10141e; border-radius: 4px; }
.vec label, .num label { display: flex; height: 31px; line-height: 31px; padding: 0 23px 0 25px; }
.vec input, .num input { flex: 1; min-width: 0; width: 0; text-align: right; }
.num { padding: 2px 16px 1px; }
.num label { background: #10141e; border-radius: 4px; }
.ck { display: flex; align-items: center; gap: 8px; margin-left: -2px; }
.ck input { appearance: none; width: 20px; height: 20px; border-radius: 4px; background: #0d0d0e; }
.n-in { left: 246px; top: 119px; }
.n-curve { left: 817px; top: 257px; }
.n-cube { left: 818px; top: 553px; }
.n-inst { left: 1473px; top: 219px; }
.n-join { left: 1754px; top: 76px; }
.n-out { left: 2099px; top: 79px; }
```
FILE: scene.js
```js
// Each block: top corner, right corner, left corner of its lid, then the edge that drops from the lid.
const upper = [
  [770,108, 827,140, 688,200, 0,88],
  [622,84, 677,116, 540,175, -1,90],
  [485,92, 542,123, 395,184, 0,91],
  [372,125, 430,158, 290,222, 0,92],
  [293,180, 350,212, 190,282, 3,95],
  [245,245, 305,280, 140,350, 3,98],
  [243,312, 303,350, 132,423, 8,100],
  [277,372, 343,412, 166,490, 6,100],
  [655,150, 720,190, 552,255, 2,102],
  [697,172, 765,208, 600,285, 0,100],
  [721,210, 789,258, 620,325, 1,98],
  [714,270, 785,312, 612,395, 1,100],
  [676,333, 748,370, 573,455, 0,108],
  [620,388, 688,428, 506,508, 3,104],
  [528,418, 593,455, 418,540, 2,104],
  [433,428, 497,468, 321,553, 5,103],
  [343,412, 408,452, 231,535, 5,103],
  [928,168, 984,199, 848,259, -1,86],
  [1080,265, 1138,297, 1005,358, -3,86],
  [1219,402, 1279,434, 1147,500, -5,84],
  [1334,574, 1397,610, 1263,680, -7,82],
  [1415,782, 1479,821, 1344,893, -8,81],
  [1450,1015, 1517,1057, 1377,1137, -9,82]
];
const lower = [
  [1432,122, 1500,168, 1358,253, -8,80],
  [1355,367, 1425,415, 1275,510, -8,79],
  [1221,587, 1291,640, 1136,740, -6,75],
  [1041,763, 1111,820, 949,920, -4,74],
  [834,877, 901,935, 738,1040, -1,72],
  [623,921, 689,976, 523,1083, 2,72],
  [434,897, 495,951, 330,1054, 5,70],
  [566,118, 615,153, 491,222, 1,62],
  [459,119, 507,155, 383,228, 1,61],
  [353,152, 401,190, 275,258, 2,62],
  [258,218, 306,256, 172,330, 3,64],
  [187,315, 233,352, 92,430, 7,62],
  [140,432, 191,478, 44,557, 7,65],
  [138,568, 189,612, 37,700, 7,65],
  [184,702, 239,750, 81,845, 9,67],
  [284,819, 341,871, 179,968, 6,69],
  [668,147, 716,182, 594,250, 0,62],
  [755,202, 803,237, 682,308, 0,61],
  [820,276, 871,312, 748,383, 0,59],
  [863,362, 914,400, 791,474, 0,58],
  [886,456, 932,488, 809,568, 0,58],
  [875,530, 925,570, 802,650, -1,62],
  [847,590, 897,632, 773,712, 0,57],
  [800,642, 853,682, 730,752, 0,60],
  [758,645, 810,688, 686,765, 0,57],
  [720,628, 773,670, 644,745, 0,60]
];
const NS = "http://www.w3.org/2000/svg";
function add(parent, cls, d) {
  const p = document.createElementNS(NS, "path");
  p.setAttribute("class", cls);
  p.setAttribute("d", d);
  parent.append(p);
}
function block(g, b, lidOnly) {
  const [ax, ay, bx, by, dx, dy, wx, wy] = b;
  const cx = bx + dx - ax, cy = by + dy - ay;
  if (!lidOnly) {
    add(g, "cl", `M${dx} ${dy}L${cx} ${cy}l${wx} ${wy}L${dx + wx} ${dy + wy}z`);
    add(g, "cr", `M${bx} ${by}L${cx} ${cy}l${wx} ${wy}L${bx + wx} ${by + wy}z`);
  }
  add(g, "ct", `M${ax} ${ay}L${bx} ${by}L${cx} ${cy}L${dx} ${dy}z`);
}
// Where blocks interpenetrate, the higher lids are painted again over the bodies.
function draw(id, list, lids, threads) {
  const g = document.getElementById(id);
  list.forEach(b => block(g, b));
  lids.forEach(n => block(g, list[n], true));
  add(g, "thread", threads);
}
draw("upper", upper, [15, 14, 13, 12, 11, 10, 9],
  "M801 229L857 250M951 293L1021 338M1100 399L1170 468M1235 546L1296 636M1345 736L1383 830M1418 970L1430 1047");
draw("lower", lower, [24, 23, 22, 21, 20, 19],
  "M1435 103V123M1394 350L1383 385M1295 589L1274 622M1137 800L1113 823M949 951L885 986M738 1038L658 1054M537 1055L456 1043M359 1004L295 969M222 901L186 855M141 757L129 724M590 229L605 234M685 265L700 273M767 328L775 338");
```
